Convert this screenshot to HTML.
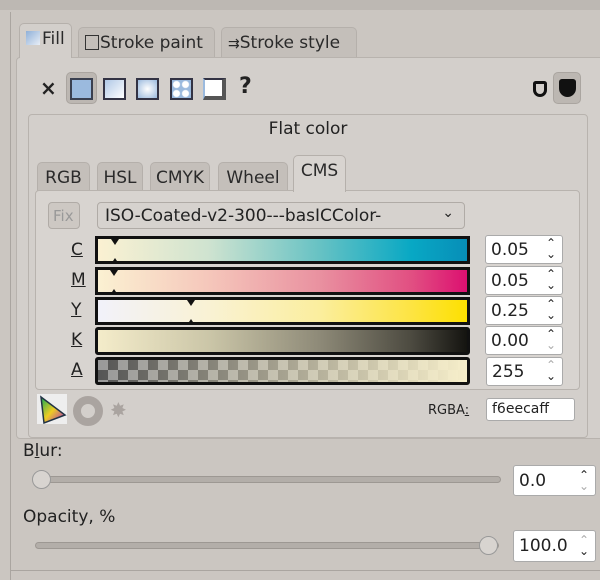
<!DOCTYPE html><html><head><style>
*{box-sizing:border-box;margin:0;padding:0}
body{width:600px;height:580px;overflow:hidden;background:#cbc6c1;font-family:"DejaVu Sans","Liberation Sans",sans-serif;color:#222;position:relative;font-size:17px}
.a{position:absolute}
.tab{position:absolute;border:1px solid #b5b0ab;border-bottom:none;border-radius:5px 5px 0 0;background:#c4bfba;font-size:17px;padding-top:5px;color:#2a2a2a}
.panel{position:absolute;border:1px solid #b8b3ae;border-radius:4px;background:#d3cfcb}
.btn{position:absolute;width:23px;height:22px;border:2px solid #334;top:78px}
.bar{position:absolute;left:95px;width:375px;height:28px;border:3px solid #111;}
.lbl{position:absolute;left:71px;font-size:17px;text-decoration:underline}
.spin{position:absolute;background:#fff;border:1px solid #aaa;border-radius:3px;font-size:17px;padding:4px 0 0 5px}
.spin i{position:absolute;right:6px;top:2px;font-style:normal;font-size:12px;line-height:11px;text-align:center}
.mk{position:absolute;width:0;height:0;border-left:4px solid transparent;border-right:4px solid transparent}
</style></head><body>
<div class="a" style="left:0;top:0;width:600px;height:10px;background:#bdb8b3"></div>
<div class="a" style="left:10px;top:12px;width:1px;height:568px;background:#aaa5a0"></div>
<div class="tab" style="left:19px;top:23px;width:53px;height:35px;background:#d3cfcb;z-index:2"><span style="display:inline-block;width:14px;height:14px;background:linear-gradient(135deg,#8fb0d8,#e8eef6);margin:0 2px 0 6px;vertical-align:-1px"></span>Fill</div>
<div class="tab" style="left:78px;top:27px;width:137px;height:30px"><span style="display:inline-block;width:14px;height:15px;border:1px solid #333;margin:0 1px 0 6px;vertical-align:-2px"></span>Stroke paint</div>
<div class="tab" style="left:221px;top:27px;width:136px;height:30px"><span style="margin-left:6px;font-size:14px">⇉</span>Stroke style</div>
<div class="panel" style="left:16px;top:57px;width:590px;height:382px;background:#d3cfcb"></div>
<div class="a" style="left:40px;top:76px;font-size:20px;font-weight:bold">×</div>
<div class="a" style="left:66px;top:72px;width:31px;height:32px;border-radius:5px;background:#bcb7b2;border:1px solid #aaa5a0"></div>
<div class="btn" style="left:70px;background:#9bbade;border-color:#3a4050"></div>
<div class="btn" style="left:103px;background:linear-gradient(135deg,#b0c8e6,#fff)"></div>
<div class="btn" style="left:136px;background:radial-gradient(#fff,#9bbade)"></div>
<div class="btn" style="left:170px;background:radial-gradient(circle,#fff 3px,transparent 4px) 0 0/9px 9px,#9bbade"></div>
<div class="btn" style="left:203px;background:#fff;border-right-width:4px;border-bottom-width:4px;border-color:#334 #555 #555 #9bbade"></div>
<div class="a" style="left:239px;top:74px;font-size:22px;font-weight:bold">?</div>
<div class="a" style="left:533px;top:81px;width:14px;height:16px;border:3px solid #111;border-radius:3px 3px 8px 8px"></div>
<div class="a" style="left:553px;top:72px;width:28px;height:32px;border-radius:5px;background:#bcb7b2;border:1px solid #aaa5a0"></div>
<div class="a" style="left:559px;top:79px;width:17px;height:18px;background:#111;border-radius:3px 3px 9px 9px"></div>
<div class="panel" style="left:28px;top:114px;width:560px;height:324px;background:#d3cfcb"></div>
<div class="a" style="left:0;width:616px;top:119px;text-align:center;font-size:17px">Flat color</div>
<div class="tab" style="left:37px;top:162px;width:53px;height:29px;text-align:center">RGB</div>
<div class="tab" style="left:97px;top:162px;width:46px;height:29px;text-align:center">HSL</div>
<div class="tab" style="left:150px;top:162px;width:60px;height:29px;text-align:center">CMYK</div>
<div class="tab" style="left:218px;top:162px;width:70px;height:29px;text-align:center">Wheel</div>
<div class="tab" style="left:293px;top:155px;width:53px;height:37px;text-align:center;background:#d8d4d0;z-index:2">CMS</div>
<div class="panel" style="left:35px;top:190px;width:545px;height:200px;background:#d8d4d0"></div>
<div class="a" style="left:48px;top:202px;width:32px;height:27px;border:1px solid #b0aba6;border-radius:4px;background:#cdc8c3;color:#999;font-size:15px;padding:4px 0 0 4px">Fix</div>
<div class="a" style="left:97px;top:202px;width:368px;height:27px;border:1px solid #b0aba6;border-radius:4px;background:#d6d2ce;padding:3px 0 0 7px">ISO-Coated-v2-300---basICColor-<span style="position:absolute;right:10px;top:2px;font-size:14px">⌄</span></div>
<div class="lbl" style="top:240px">C</div>
<div class="lbl" style="top:270px">M</div>
<div class="lbl" style="top:300px">Y</div>
<div class="lbl" style="top:330px">K</div>
<div class="lbl" style="top:360px">A</div>
<div class="bar" style="top:236px;background:linear-gradient(90deg,#fbf1d2,#cfe3d0 30%,#67c2c4 60%,#08a8c4 85%,#078eb8)"></div>
<div class="bar" style="top:267px;background:linear-gradient(90deg,#fbf1d2,#f5c7bb 30%,#e991a0 60%,#e14f82 85%,#dc1070)"></div>
<div class="bar" style="top:297px;background:linear-gradient(90deg,#f2f2fa,#f9f2d4 30%,#fbee9e 60%,#fde442 85%,#fde000)"></div>
<div class="bar" style="top:327px;border-radius:3px;background:linear-gradient(90deg,#f4ecca,#cbc6a8 30%,#8e8a78 60%,#4c4a40 85%,#141410)"></div>
<div class="bar" style="top:357px;border-radius:3px;background:linear-gradient(90deg,rgba(246,238,202,0),#f6eeca),repeating-conic-gradient(#555 0 25%,#999 0 50%) 0 0/20px 20px"></div>
<div class="mk" style="left:111px;top:239px;border-top:6px solid #111"></div><div class="mk" style="left:111px;top:258px;border-bottom:6px solid #111"></div>
<div class="mk" style="left:110px;top:270px;border-top:6px solid #111"></div><div class="mk" style="left:110px;top:289px;border-bottom:6px solid #111"></div>
<div class="mk" style="left:187px;top:300px;border-top:6px solid #111"></div><div class="mk" style="left:187px;top:319px;border-bottom:6px solid #111"></div>
<div class="spin" style="left:485px;top:235px;width:78px;height:29px">0.05<i>⌃<br>⌄</i></div>
<div class="spin" style="left:485px;top:266px;width:78px;height:29px">0.05<i>⌃<br>⌄</i></div>
<div class="spin" style="left:485px;top:296px;width:78px;height:29px">0.25<i>⌃<br>⌄</i></div>
<div class="spin" style="left:485px;top:326px;width:78px;height:29px">0.00<i>⌃<br><span style="color:#aaa">⌄</span></i></div>
<div class="spin" style="left:486px;top:357px;width:77px;height:29px">255<i><span style="color:#aaa">⌃</span><br>⌄</i></div>
<div class="a" style="left:37px;top:394px;width:30px;height:30px;background:#eee"></div>
<svg class="a" style="left:38px;top:395px" width="30" height="30"><defs><linearGradient id="g" x1="0" y1="0" x2="1" y2="1"><stop offset="0" stop-color="#1a5"/><stop offset=".5" stop-color="#ec2"/><stop offset="1" stop-color="#a2c"/></linearGradient></defs><polygon points="3,2 27,20 6,28" fill="url(#g)" stroke="#234" stroke-width="1.5"/></svg>
<div class="a" style="left:73px;top:396px;width:30px;height:30px;border-radius:50%;border:8px solid #aaa4a0"></div>
<div class="a" style="left:110px;top:400px;width:20px;height:20px;color:#aaa4a0;font-size:20px;line-height:20px">✸</div>
<div class="a" style="left:428px;top:403px;font-size:13px">RGBA<u>:</u></div>
<div class="a" style="left:486px;top:398px;width:89px;height:23px;background:#fff;border:1px solid #aaa;border-radius:3px;font-size:14px;padding:2px 0 0 5px">f6eecaff</div>
<div class="a" style="left:23px;top:441px;font-size:17px">B<u>l</u>ur:</div>
<div class="a" style="left:33px;top:476px;width:468px;height:7px;border-radius:4px;background:#b3aea9;border:1px solid #9d9893"></div>
<div class="a" style="left:32px;top:470px;width:19px;height:19px;border-radius:50%;background:#d8d4d0;border:1px solid #999"></div>
<div class="spin" style="left:513px;top:465px;width:83px;height:31px;padding-top:5px">0.0<i style="top:4px">⌃<br><span style="color:#aaa">⌄</span></i></div>
<div class="a" style="left:23px;top:507px;font-size:17px">Opacity, %</div>
<div class="a" style="left:35px;top:542px;width:464px;height:7px;border-radius:4px;background:#b3aea9;border:1px solid #9d9893"></div>
<div class="a" style="left:479px;top:536px;width:19px;height:19px;border-radius:50%;background:#d8d4d0;border:1px solid #999"></div>
<div class="spin" style="left:513px;top:530px;width:83px;height:32px;padding-top:5px">100.0<i style="top:4px"><span style="color:#aaa">⌃</span><br>⌄</i></div>
<div class="a" style="left:10px;top:570px;width:590px;height:1px;background:#aaa5a0"></div>
</body></html>
